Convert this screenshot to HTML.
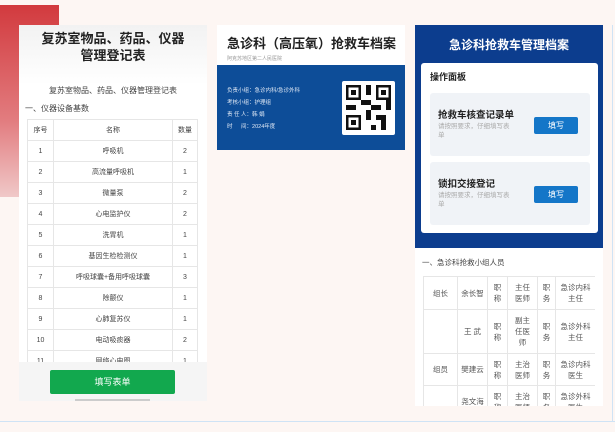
<!DOCTYPE html><html><head><meta charset="utf-8"><style>
*{margin:0;padding:0;box-sizing:border-box}
body{width:615px;height:432px;overflow:hidden;background:#fdf6f3;font-family:"Liberation Sans","Noto Sans CJK SC",sans-serif;position:relative}
.abs{position:absolute}
.red{left:0;top:5px;width:59px;height:192px;background:linear-gradient(180deg,#d23a3e,#e27c7f 60%,#f0c8c8)}
.p1{left:19px;top:25px;width:188px;height:376px;background:linear-gradient(#f2f2f2,#fff 60px);overflow:hidden}
.p1 h1{font-size:13px;text-align:center;line-height:17px;margin-top:5px;color:#222}
table{border-collapse:collapse;font-size:7px;color:#444;text-align:center}
td{border:1px solid #e6e6e6;background:#fff}
.p2{left:217px;top:25px;width:188px;height:125px;background:#0d4d98}
.p3{left:415px;top:25px;width:188px;height:381px;background:#fff}
.card{background:#f0f3f7;border-radius:3px;position:absolute;left:9px;width:160px;height:63px}
.btn{position:absolute;right:12px;width:44px;height:17px;background:#1476c8;color:#fff;font-size:8px;text-align:center;line-height:17px;border-radius:2px}
.desc{font-size:6.5px;color:#aaa;width:82px;padding-left:8px;line-height:9px;margin-top:1px}
.t3{table-layout:fixed}
.t3 td{padding:0 4px;font-size:7.5px;line-height:11px;color:#555}
</style></head><body>
<div class="abs red"></div>
<div class="abs p1">
<h1>复苏室物品、药品、仪器<br>管理登记表</h1>
<div style="font-size:8px;color:#444;text-align:center;margin-top:21px">复苏室物品、药品、仪器管理登记表</div>
<div style="font-size:8px;color:#444;margin:7px 0 0 6px">一、仪器设备基数</div>
<table style="position:absolute;left:8px;top:94px;width:171px">
<tr style="height:21px"><td style="width:26px">序号</td><td>名称</td><td style="width:25px">数量</td></tr>
<tr style="height:21px"><td>1</td><td>呼吸机</td><td>2</td></tr>
<tr style="height:21px"><td>2</td><td>高流量呼吸机</td><td>1</td></tr>
<tr style="height:21px"><td>3</td><td>微量泵</td><td>2</td></tr>
<tr style="height:21px"><td>4</td><td>心电监护仪</td><td>2</td></tr>
<tr style="height:21px"><td>5</td><td>洗胃机</td><td>1</td></tr>
<tr style="height:21px"><td>6</td><td>基因生检检测仪</td><td>1</td></tr>
<tr style="height:21px"><td>7</td><td>呼吸球囊+备用呼吸球囊</td><td>3</td></tr>
<tr style="height:21px"><td>8</td><td>除颤仪</td><td>1</td></tr>
<tr style="height:21px"><td>9</td><td>心肺复苏仪</td><td>1</td></tr>
<tr style="height:21px"><td>10</td><td>电动吸痰器</td><td>2</td></tr>
<tr style="height:21px"><td>11</td><td>网络心电图</td><td>1</td></tr>
</table>
<div style="position:absolute;left:0;top:337px;width:188px;height:39px;background:#f5f5f5"></div>
<div style="position:absolute;left:31px;top:345px;width:125px;height:24px;background:#12a84e;border-radius:2px;color:#fff;font-size:9px;text-align:center;line-height:24px">填写表单</div>
<div style="position:absolute;left:56px;top:374px;width:75px;height:2px;background:#ccc"></div>
</div>
<div class="abs p2">
<div style="background:#fff;height:40px;padding:8px 0 0 10px"><div style="font-size:13px;font-weight:bold;color:#222">急诊科（高压氧）抢救车档案</div><div style="font-size:5px;color:#999;margin-top:3px">阿克苏地区第二人民医院</div></div>
<div style="color:#dfe8f5;font-size:5.5px;line-height:12px;padding:20px 0 0 10px">负责小组：急诊内科/急诊外科<br>考核小组：护理组<br>责 任 人：韩 娟<br>时 　 间：2024年度</div>
<div style="position:absolute;left:125px;top:56px;width:53px;height:54px;background:#fff;border-radius:2px"><svg width="45" height="45" style="margin:4px" viewBox="0 0 9 9"><path fill="#111" d="M0 0h3v3H0zM6 0h3v3H6zM0 6h3v3H0z"/><path fill="#fff" d="M.5.5h2v2h-2zM6.5.5h2v2h-2zM.5 6.5h2v2h-2z"/><path fill="#111" d="M1 1h1v1H1zM7 1h1v1H7zM1 7h1v1H1zM4 0h1v2H4zM3 3h2v1H3zM5 4h2v1H5zM4 5h1v2H4zM6 6h2v1H6zM7 7h1v2H7zM5 8h1v1H5zM0 4h2v1H0zM8 3h1v2H8z"/></svg></div>
</div>
<div class="abs p3">
<div style="background:#0c3d8e;height:223px;position:relative">
<div style="color:#fff;font-size:12px;font-weight:bold;text-align:center;padding-top:11px">急诊科抢救车管理档案</div>
<div style="position:absolute;left:6px;top:38px;width:177px;height:170px;background:#fff;border-radius:3px">
<div style="font-size:9px;font-weight:bold;color:#222;padding:7px 0 0 9px">操作面板</div>
<div class="card" style="top:30px"><div style="font-size:9.5px;font-weight:bold;color:#222;padding:14px 0 0 8px">抢救车核查记录单</div><div class="desc">请按照要求，仔细填写表单</div><div class="btn" style="top:24px">填写</div></div>
<div class="card" style="top:99px"><div style="font-size:9.5px;font-weight:bold;color:#222;padding:14px 0 0 8px">锁扣交接登记</div><div class="desc">请按照要求，仔细填写表单</div><div class="btn" style="top:24px">填写</div></div>
</div></div>
<div style="font-size:7.5px;color:#444;padding:9px 0 0 7px">一、急诊科抢救小组人员</div>
<div style="position:absolute;left:8px;top:251px;width:172px;height:130px;overflow:hidden">
<table class="t3" style="width:172px">
<colgroup><col style="width:34px"><col style="width:30px"><col style="width:20px"><col style="width:30px"><col style="width:18px"><col style="width:40px"></colgroup>
<tr style="height:33px"><td>组长</td><td style="padding:0">余长智</td><td>职称</td><td>主任医师</td><td>职务</td><td>急诊内科主任</td></tr>
<tr style="height:44px"><td></td><td style="padding:0">王 武</td><td>职称</td><td>副主任医师</td><td>职务</td><td>急诊外科主任</td></tr>
<tr style="height:32px"><td>组员</td><td style="padding:0">樊建云</td><td>职称</td><td>主治医师</td><td>职务</td><td>急诊内科医生</td></tr>
<tr style="height:32px"><td></td><td style="padding:0">尧文海</td><td>职称</td><td>主治医师</td><td>职务</td><td>急诊外科医生</td></tr>
</table></div>
</div>
<div class="abs" style="left:0;top:421px;width:615px;height:1px;background:#cfe3f5"></div>
<div class="abs" style="left:612px;top:25px;width:1px;height:397px;background:#cfe3f5"></div>
</body></html>
